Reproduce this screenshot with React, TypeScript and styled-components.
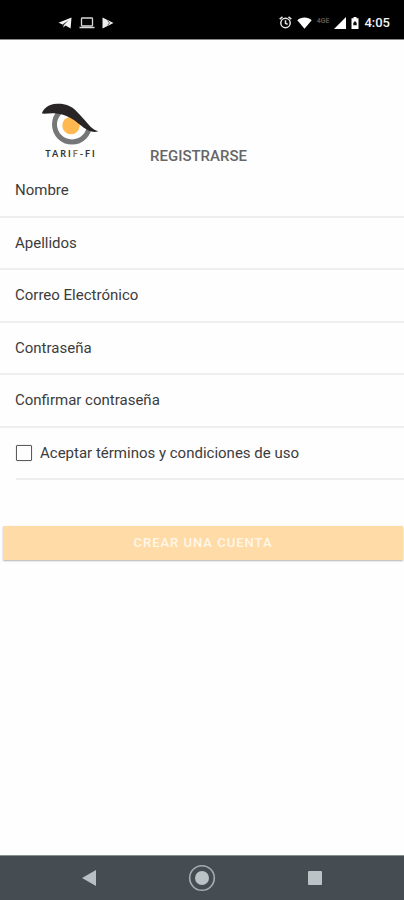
import React, { useState } from "react";
import styled, { createGlobalStyle } from "styled-components";

const GlobalStyle = createGlobalStyle`
  *, *::before, *::after { box-sizing: border-box; }
  body {
    margin: 0;
    background: #fefefe;
    color: #3c3c3c;
    font-family: Roboto, "Liberation Sans", sans-serif;
  }
`;

const Screen = styled.div`
  display: flex;
  flex-direction: column;
  min-height: 100vh;
`;

const StatusBar = styled.div`
  display: flex;
  align-items: center;
  justify-content: space-between;
  height: 40px;
  padding: 6px 14px 0 58px;
  background: #000;
  border-bottom: 1px solid #8a8a8a;
  color: #f4f4f4;
`;

const StatusGroup = styled.div<{ $gap: number }>`
  display: flex;
  align-items: center;
  gap: ${({ $gap }) => $gap}px;

  svg { display: block; }
`;

const Network = styled.span`
  padding-bottom: 4px;
  color: #555;
  font-size: 7px;
  font-weight: 700;
  line-height: 8px;
`;

const Clock = styled.time`
  font-size: 13px;
  line-height: 16px;
  font-weight: 500;
`;

const Main = styled.main`
  flex: 1;
`;

const Header = styled.header`
  display: flex;
  align-items: flex-end;
  gap: 50px;
  padding: 62px 16px 2px 40px;
`;

const Brand = styled.div`
  display: flex;
  flex-direction: column;
  align-items: center;
  width: 60px;
  padding-bottom: 3px;

  svg { display: block; }
`;

const BrandName = styled.span`
  padding-left: 2px;
  color: #333;
  font-family: Lato, sans-serif;
  font-size: 9px;
  font-weight: 700;
  line-height: 12px;
  letter-spacing: 2px;
  white-space: nowrap;
`;

const Accent = styled.span`
  color: #8f7440;
`;

const Title = styled.h1`
  margin: 0;
  color: #666;
  font-size: 15px;
  font-weight: 500;
  line-height: 14px;
`;

const Fields = styled.div`
  display: grid;
  grid-auto-rows: 1fr;
  min-height: 315px;
`;

const Row = styled.div<{ $inset?: boolean }>`
  display: flex;
  align-items: center;
  gap: 8px;
  margin-left: ${({ $inset }) => ($inset ? 16 : 0)}px;
  padding-left: ${({ $inset }) => ($inset ? 0 : 15)}px;
  border-bottom: 2px solid #efefef;
`;

const Label = styled.label`
  font-size: 15px;
  line-height: 20px;
  white-space: nowrap;
`;

const Input = styled.input`
  flex: 1;
  min-width: 0;
  height: 40px;
  border: 0;
  outline: 0;
  padding: 0 16px 0 0;
  background: transparent;
  color: inherit;
  font: inherit;
`;

const Checkbox = styled.input`
  appearance: none;
  flex: none;
  width: 16px;
  height: 16px;
  margin: 0;
  border: 1px solid #5c5c5c;
  border-radius: 1px;
  box-shadow: 0 0 1px #888;

  &:checked { background: #ffc46b; }
`;

const Submit = styled.button`
  display: block;
  width: calc(100% - 4px);
  height: 34px;
  margin: 46px 1px 0 3px;
  border: 0;
  border-radius: 1px;
  padding: 0;
  background: #ffdba8;
  box-shadow: 0 1px 2px rgba(0, 0, 0, 0.3);
  color: #fff7ea;
  font: 500 13px/16px Roboto, "Liberation Sans", sans-serif;
  letter-spacing: 1px;
  text-transform: uppercase;
`;

const NavBar = styled.nav`
  display: flex;
  align-items: center;
  justify-content: space-between;
  height: 45px;
  padding: 0 75px;
  background: #454d52;
  border-top: 1px solid #869090;
`;

const NavButton = styled.button`
  display: grid;
  place-items: center;
  width: 28px;
  height: 28px;
  border: 0;
  padding: 0;
  background: transparent;

  svg { display: block; }
`;

const fields = [
  { id: "nombre", label: "Nombre", type: "text" },
  { id: "apellidos", label: "Apellidos", type: "text" },
  { id: "correo", label: "Correo Electrónico", type: "email" },
  { id: "clave", label: "Contraseña", type: "password" },
  { id: "confirmar", label: "Confirmar contraseña", type: "password" },
];

const TelegramIcon = () => (
  <svg width="14" height="12" viewBox="0 0 14 12">
    <path d="M0.5 5.8 L13.5 0.5 L12.6 11.5 L7.6 8.4 L5.2 10.6 L4.7 7.4 Z" fill="#f2f2f2" />
    <path d="M4.7 7.3 L10.6 3.2 L6.2 7.8 L5.2 10.4 Z" fill="#333" />
  </svg>
);

const LaptopIcon = () => (
  <svg width="16" height="12" viewBox="0 0 16 12">
    <rect x="2.5" y="1" width="11" height="8" rx="0.8" fill="none" stroke="#d8d8d8" strokeWidth="1.3" />
    <path d="M0.5 10.5 H15.5" stroke="#d8d8d8" strokeWidth="1.5" />
  </svg>
);

const PlayIcon = () => (
  <svg width="12" height="12" viewBox="0 0 12 12">
    <path d="M0.5 0.5 L11.5 6 L0.5 11.5 Z" fill="#eee" />
    <path d="M5.5 3.6 L7.6 6 L5.5 8.4" fill="none" stroke="#555" strokeWidth="0.9" />
  </svg>
);

const AlarmIcon = () => (
  <svg width="13" height="13" viewBox="0 0 13 13" fill="none" stroke="#e6e6e6" strokeWidth="1.5">
    <circle cx="6.5" cy="7" r="4.7" />
    <path d="M6.5 4.3 V7.2 L8.6 8.4 M0.7 3.2 L3.5 0.9 M12.3 3.2 L9.5 0.9" />
  </svg>
);

const WifiIcon = () => (
  <svg width="15" height="12" viewBox="0 0 15 12">
    <path d="M0.3 3.3 C4 -0.3 11 -0.3 14.7 3.3 L7.5 11.8 Z" fill="#fff" />
  </svg>
);

const SignalIcon = () => (
  <svg width="12" height="12" viewBox="0 0 12 12">
    <path d="M12 0 V12 H0 Z" fill="#fff" />
  </svg>
);

const BatteryIcon = () => (
  <svg width="8" height="12" viewBox="0 0 8 12">
    <path d="M2.5 0 H5.5 V1.3 H7.5 V12 H0.5 V1.3 H2.5 Z" fill="#fff" />
    <path d="M4 4 L5.7 6 V8.3 H2.3 V6 Z" fill="#111" />
  </svg>
);

const EyeLogo = () => (
  <svg width="60" height="46" viewBox="0 0 60 46" role="img" aria-label="Tarif-Fi">
    <circle cx="32" cy="22.5" r="17.5" fill="#fff" stroke="#747677" strokeWidth="5" />
    <path d="M6 9 L30 8 L42 19 L52 27 L60 28 V0 H6 Z" fill="#fefefe" />
    <circle cx="31" cy="23.5" r="8.7" fill="#ffb950" />
    <path
      d="M1.8 11.5 C3.5 7 8 2.2 17 1.8 C25 1.4 31 4 35.5 8.3 C39 11.8 42 15.5 45.5 19 C49 23 52 27.5 58.3 29.3 C55 30.5 51.5 30 48.5 28.5 C41 25 37.5 19.5 30 15.8 C26 13.8 22 12 16 11.5 C11 10.8 6 12 1.8 11.5 Z"
      fill="#292526"
    />
  </svg>
);

export default function App() {
  const [accepted, setAccepted] = useState(false);

  return (
    <>
      <GlobalStyle />
      <Screen>
        <StatusBar>
          <StatusGroup $gap={7}>
            <TelegramIcon />
            <LaptopIcon />
            <PlayIcon />
          </StatusGroup>
          <StatusGroup $gap={5}>
            <AlarmIcon />
            <WifiIcon />
            <Network>4GE</Network>
            <SignalIcon />
            <BatteryIcon />
            <Clock>4:05</Clock>
          </StatusGroup>
        </StatusBar>
        <Main>
          <Header>
            <Brand>
              <EyeLogo />
              <BrandName>
                TARI<Accent>F</Accent>-FI
              </BrandName>
            </Brand>
            <Title>REGISTRARSE</Title>
          </Header>
          <form onSubmit={(event) => event.preventDefault()}>
            <Fields>
              {fields.map(({ id, label, type }) => (
                <Row key={id}>
                  <Label htmlFor={id}>{label}</Label>
                  <Input id={id} type={type} />
                </Row>
              ))}
              <Row $inset>
                <Checkbox
                  id="terminos"
                  type="checkbox"
                  checked={accepted}
                  onChange={(event) => setAccepted(event.target.checked)}
                />
                <Label htmlFor="terminos">Aceptar términos y condiciones de uso</Label>
              </Row>
            </Fields>
            <Submit type="submit">Crear una cuenta</Submit>
          </form>
        </Main>
        <NavBar>
          <NavButton aria-label="Atrás">
            <svg width="14" height="16" viewBox="0 0 14 16">
              <path d="M0 8 L14 0 V16 Z" fill="#b9c0c3" />
            </svg>
          </NavButton>
          <NavButton aria-label="Inicio">
            <svg width="28" height="28" viewBox="0 0 28 28">
              <circle cx="14" cy="14" r="12.3" fill="none" stroke="#a5adb0" strokeWidth="1.6" />
              <circle cx="14" cy="14" r="7" fill="#bcc3c6" />
            </svg>
          </NavButton>
          <NavButton aria-label="Recientes">
            <svg width="14" height="14" viewBox="0 0 14 14">
              <rect width="14" height="14" rx="1" fill="#bcc3c6" />
            </svg>
          </NavButton>
        </NavBar>
      </Screen>
    </>
  );
}
